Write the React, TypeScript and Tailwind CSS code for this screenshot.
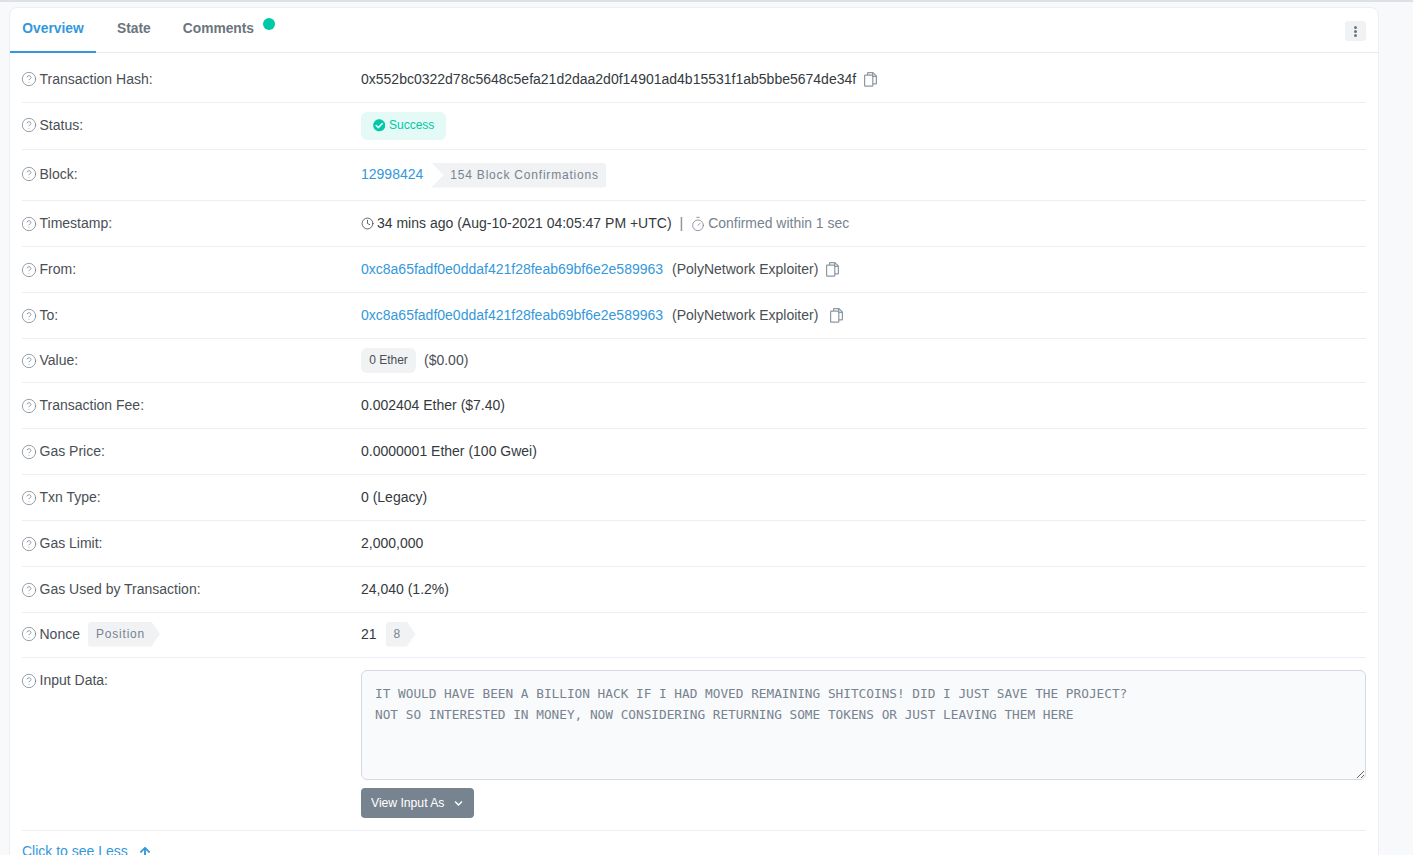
import React from "react";
import { CircleHelp, Clock, Timer } from "lucide-react";
import { FaCheckCircle, FaChevronDown, FaArrowUp } from "react-icons/fa";

const CopyIcon = () => (
  <svg width="13" height="15" viewBox="0 0 13 15" fill="none" stroke="#8c98a4" strokeWidth="1.2" className="shrink-0">
    <path d="M3.6 3V1.1a.5.5 0 0 1 .5-.5h4.7l3.6 3.5v7.3a.5.5 0 0 1-.5.5H8.8" />
    <path d="M8.6.8v3.5h3.6" />
    <rect x="0.6" y="3.2" width="8.2" height="11" rx="0.6" />
  </svg>
);

const HelpIcon = () => (
  <CircleHelp size={16} strokeWidth={1.15} className="-ml-[1px] mr-[2.5px] shrink-0 text-[#77838f]" />
);

const Row = ({
  label,
  extra,
  height,
  children,
}: {
  label: string;
  extra?: React.ReactNode;
  height: string;
  children: React.ReactNode;
}) => (
  <div className={`flex items-center border-b border-[#eceef1] ${height}`}>
    <div className="flex w-[339px] shrink-0 items-center text-[#4a4f55]">
      <HelpIcon />
      {label}
      {extra}
    </div>
    <div className="flex min-w-0 flex-1 items-center text-[#343a40]">{children}</div>
  </div>
);

const Address = () => <a className="text-[#3498db]">0xc8a65fadf0e0ddaf421f28feab69bf6e2e589963</a>;

export default function App() {
  return (
    <div className="h-[855px] overflow-hidden bg-[#f8f9fb] font-['Liberation_Sans',sans-serif] text-[14px] leading-[21px]">
      <div className="h-[2px] border-b-2 border-[#dde0e7]" />
      <div className="ml-[9px] mt-[5px] w-[1370px] rounded-t-[8px] border border-[#eceef3] bg-white">
        <div className="flex h-[45px] items-start border-b border-[#e7eaf3] pr-[12px] text-[13.8px]">
          <a className="flex h-[45px] w-[86px] items-center justify-center border-b-2 border-[#3498db] pb-[3px] font-bold text-[#3498db]">
            Overview
          </a>
          <a className="ml-[21px] flex h-[44px] items-center pb-[3px] font-bold text-[#6c757e]">State</a>
          <a className="relative ml-[32px] flex h-[44px] items-center pb-[3px] font-bold text-[#6c757e]">
            Comments
            <span className="absolute left-[80px] top-[10px] h-3 w-3 rounded-full bg-[#00c9a7]" />
          </a>
          <button className="ml-auto mt-[13px] flex h-[20px] w-[21px] items-center justify-center rounded-[3px] bg-[#f1f2f4]">
            <span className="flex flex-col gap-[1px]">
              <span className="h-[3px] w-[3px] rounded-full bg-[#6c757e]" />
              <span className="h-[3px] w-[3px] rounded-full bg-[#6c757e]" />
              <span className="h-[3px] w-[3px] rounded-full bg-[#6c757e]" />
            </span>
          </button>
        </div>

        <div className="px-[12px]">
          <Row label="Transaction Hash:" height="h-[50px] pt-[3px]">
            0x552bc0322d78c5648c5efa21d2daa2d0f14901ad4b15531f1ab5bbe5674de34f
            <span className="ml-[8px]">
              <CopyIcon />
            </span>
          </Row>
          <Row label="Status:" height="h-[47px] pb-[2px]">
            <span className="mt-[1px] flex h-[28px] w-[85px] items-center rounded-[6px] bg-[#e5f9f6] pl-[11.5px] text-[12px] text-[#00c9a7]">
              <FaCheckCircle size={12.5} className="mr-[4px]" />
              Success
            </span>
          </Row>
          <Row label="Block:" height="h-[51px] pb-[2px]">
            <a className="text-[#3498db]">12998424</a>
            <span className="ml-[8px] mt-[2px] flex h-[25px] w-[175px] items-center rounded-r-[3px] bg-[#f1f2f4] pl-[19px] text-[12px] tracking-[0.8px] text-[#77838f] [clip-path:polygon(0_0,100%_0,100%_100%,0_100%,7%_50%)]">
              154 Block Confirmations
            </span>
          </Row>
          <Row label="Timestamp:" height="h-[46px]">
            <Clock size={13} strokeWidth={1.6} className="mr-[3px] text-[#4a4f55]" />
            34 mins ago (Aug-10-2021 04:05:47 PM +UTC)
            <span className="mx-[8px] text-[#77838f]">|</span>
            <Timer size={16} strokeWidth={1.2} className="-ml-[1px] mr-[2px] text-[#77838f]" />
            <span className="text-[13.95px] text-[#77838f]">Confirmed within 1 sec</span>
          </Row>
          <Row label="From:" height="h-[46px]">
            <Address />
            <span className="ml-[9px] text-[#4a4f55]">(PolyNetwork Exploiter)</span>
            <span className="ml-[8px]">
              <CopyIcon />
            </span>
          </Row>
          <Row label="To:" height="h-[46px]">
            <Address />
            <span className="ml-[9px] text-[#4a4f55]">(PolyNetwork Exploiter)</span>
            <span className="ml-[12px]">
              <CopyIcon />
            </span>
          </Row>
          <Row label="Value:" height="h-[44px]">
            <span className="flex h-[25px] w-[55px] items-center justify-center rounded-[6px] bg-[#f1f2f4] text-[12px] text-[#4a4f55]">
              0 Ether
            </span>
            <span className="ml-[8px] text-[#4a4f55]">($0.00)</span>
          </Row>
          <Row label="Transaction Fee:" height="h-[46px]">
            0.002404 Ether ($7.40)
          </Row>
          <Row label="Gas Price:" height="h-[46px]">
            0.0000001 Ether (100 Gwei)
          </Row>
          <Row label="Txn Type:" height="h-[46px]">
            0 (Legacy)
          </Row>
          <Row label="Gas Limit:" height="h-[46px]">
            2,000,000
          </Row>
          <Row label="Gas Used by Transaction:" height="h-[46px]">
            24,040 (1.2%)
          </Row>
          <Row
            label="Nonce"
            height="h-[45px] pb-[2px]"
            extra={
              <span className="ml-[8px] flex h-[25px] w-[72px] items-center rounded-l-[3px] bg-[#f1f2f4] pl-[8px] text-[12px] tracking-[0.8px] text-[#77838f] [clip-path:polygon(0_0,88%_0,100%_50%,88%_100%,0_100%)]">
                Position
              </span>
            }
          >
            21
            <span className="ml-[9px] flex h-[25px] w-[30px] items-center rounded-l-[3px] bg-[#f1f2f4] pl-[8px] text-[12px] text-[#77838f] [clip-path:polygon(0_0,70%_0,100%_50%,70%_100%,0_100%)]">
              8
            </span>
          </Row>

          <div className="flex h-[173px] border-b border-[#eceef1] pt-[12px]">
            <div className="flex h-[21px] w-[339px] shrink-0 items-center text-[#4a4f55]">
              <HelpIcon />
              Input Data:
            </div>
            <div className="flex-1">
              <textarea
                readOnly
                className="block h-[110px] w-full resize-y rounded-[6px] border border-[#d5dae2] bg-[#f9fafc] px-[13px] pt-[12px] font-['DejaVu_Sans_Mono',monospace] text-[12.76px] leading-[21px] text-[#77838f] outline-none"
                defaultValue={
                  "IT WOULD HAVE BEEN A BILLION HACK IF I HAD MOVED REMAINING SHITCOINS! DID I JUST SAVE THE PROJECT?\nNOT SO INTERESTED IN MONEY, NOW CONSIDERING RETURNING SOME TOKENS OR JUST LEAVING THEM HERE"
                }
              />
              <button className="mt-[8px] flex h-[30px] w-[113px] items-center rounded-[4px] bg-[#77838f] pl-[10px] text-[12.25px] tracking-[-0.05px] text-white">
                View Input As
                <FaChevronDown size={9} className="ml-[10px]" />
              </button>
            </div>
          </div>

          <a className="flex items-center pt-[10px] text-[#3498db]">
            Click to see Less
            <FaArrowUp size={12} className="ml-[11px]" />
          </a>
        </div>
      </div>
    </div>
  );
}
